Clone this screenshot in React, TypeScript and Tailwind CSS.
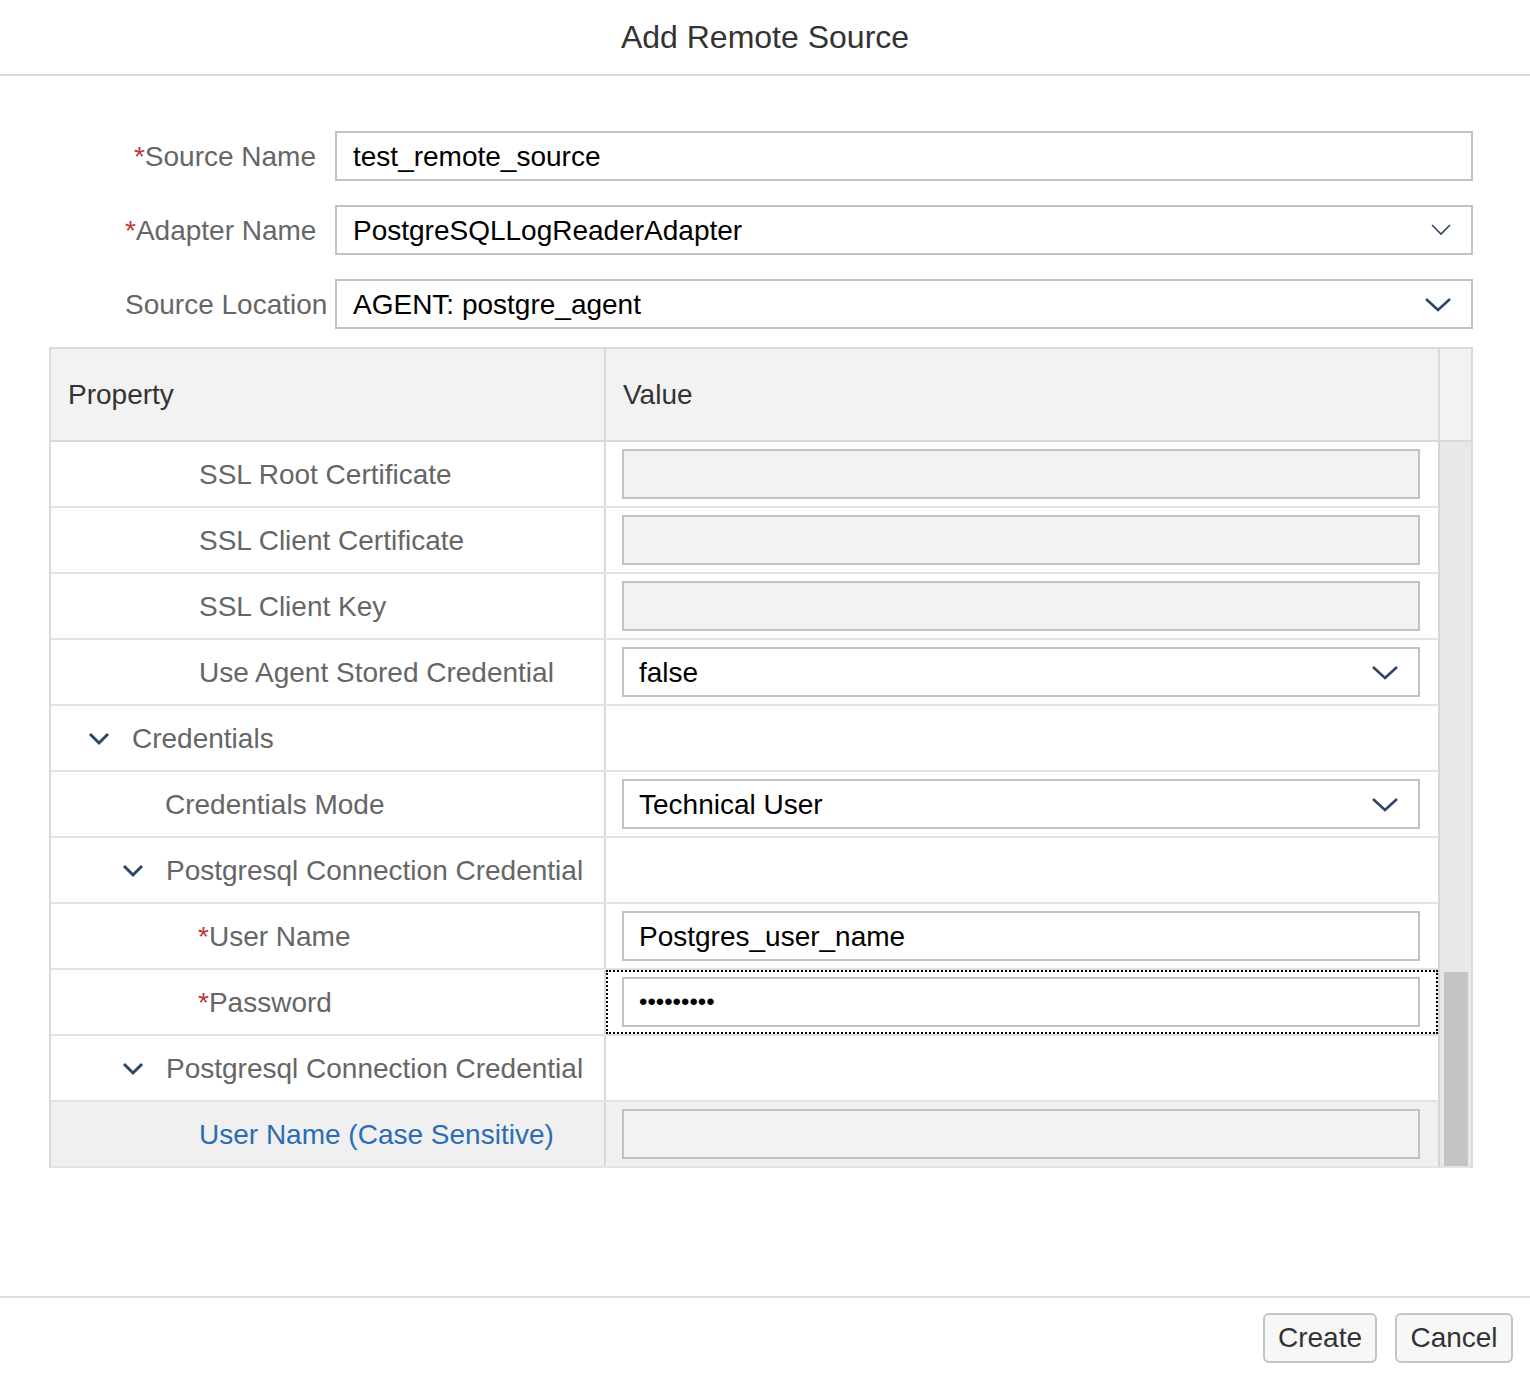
import React from 'react';

const FONT = "font-['Liberation_Sans',Arial,sans-serif]";

const TreeChevron = () => (
    <svg width="22" height="14" viewBox="0 0 22 14" className="shrink-0">
        <polyline points="2,2 11,11 20,2" fill="none" stroke="#2c4766" strokeWidth="3" />
    </svg>
);

const SelectChevron = ({ thin }: { thin?: boolean }) =>
    thin ? (
        <svg width="20" height="12" viewBox="0 0 20 12" className="shrink-0">
            <polyline points="1,1 10,10 19,1" fill="none" stroke="#2c4766" strokeWidth="1.6" />
        </svg>
    ) : (
        <svg width="26" height="15" viewBox="0 0 26 15" className="shrink-0">
            <polyline points="1,2 13,13 25,2" fill="none" stroke="#2c4766" strokeWidth="2.6" />
        </svg>
    );

const Req = () => <span className="text-[#bb3a3a]">*</span>;

type FormRowProps = { label: React.ReactNode; value: string; select?: 'thin' | 'bold' };

const FormRow: React.FC<FormRowProps> = ({ label, value, select }) => (
    <div className="flex items-center h-[50px]">
        <div className="w-[267px] pl-[76px] pt-[2px] text-right whitespace-nowrap text-[28px] text-[#666]">{label}</div>
        <div className="ml-[19px] flex-1 h-[50px] border-2 border-[#c2c2c2] bg-white flex items-center pl-[16px] pr-[20px]">
            <span className="flex-1 pt-[2px] text-[28px] text-black">{value}</span>
            {select && <SelectChevron thin={select === 'thin'} />}
        </div>
    </div>
);

type Row = {
    label: string;
    indent: number;
    req?: boolean;
    tree?: boolean;
    value?: string;
    kind?: 'empty' | 'text' | 'select' | 'password' | 'none';
    focus?: boolean;
    hover?: boolean;
    link?: boolean;
};

const rows: Row[] = [
    { label: 'SSL Root Certificate', indent: 148, kind: 'empty' },
    { label: 'SSL Client Certificate', indent: 148, kind: 'empty' },
    { label: 'SSL Client Key', indent: 148, kind: 'empty' },
    { label: 'Use Agent Stored Credential', indent: 148, kind: 'select', value: 'false' },
    { label: 'Credentials', indent: 37, tree: true, kind: 'none' },
    { label: 'Credentials Mode', indent: 114, kind: 'select', value: 'Technical User' },
    { label: 'Postgresql Connection Credential', indent: 71, tree: true, kind: 'none' },
    { label: 'User Name', indent: 147, req: true, kind: 'text', value: 'Postgres_user_name' },
    { label: 'Password', indent: 147, req: true, kind: 'password', focus: true },
    { label: 'Postgresql Connection Credential', indent: 71, tree: true, kind: 'none' },
    { label: 'User Name (Case Sensitive)', indent: 148, kind: 'empty', hover: true, link: true },
];

const ValueCell: React.FC<{ row: Row }> = ({ row }) => {
    if (row.kind === 'none') return null;
    const bg = row.kind === 'empty' ? 'bg-[#f2f2f2]' : 'bg-white';
    return (
        <div className={`h-[50px] border-2 border-[#c2c2c2] ${bg} flex items-center pl-[15px] pr-[20px]`}>
            {row.kind === 'password' ? (
                <span className="flex-1 text-[24px] text-black leading-none">{'•'.repeat(9)}</span>
            ) : (
                <span className="flex-1 pt-[2px] text-[28px] text-black leading-none">{row.value}</span>
            )}
            {row.kind === 'select' && <SelectChevron />}
        </div>
    );
};

export default function App() {
    return (
        <div className={`${FONT} w-[1530px] h-[1376px] bg-white flex flex-col`}>
            {/* Header */}
            <div className="h-[76px] shrink-0 border-b-2 border-[#d9d9d9] flex items-center justify-center">
                <span className="text-[32px] text-[#333]">Add Remote Source</span>
            </div>

            {/* Body */}
            <div className="flex-1 pt-[55px] pl-[49px] pr-[57px]">
                <div className="flex flex-col gap-[24px]">
                    <FormRow label={<><Req />Source Name</>} value="test_remote_source" />
                    <FormRow label={<><Req />Adapter Name</>} value="PostgreSQLLogReaderAdapter" select="thin" />
                    <FormRow label="Source Location" value="AGENT: postgre_agent" select="bold" />
                </div>

                {/* Properties table */}
                <div className="mt-[18px] border-2 border-[#dadada] border-b-0">
                    <div className="flex h-[93px] bg-[#f2f2f2] border-b-2 border-[#dadada]">
                        <div className="w-[555px] border-r-2 border-[#dadada] flex items-center pl-[17px] text-[28px] text-[#333]">
                            Property
                        </div>
                        <div className="flex-1 border-r-2 border-[#dadada] flex items-center pl-[17px] text-[28px] text-[#333]">
                            Value
                        </div>
                        <div className="w-[31px]" />
                    </div>
                    <div className="flex">
                        <div className="flex-1 flex flex-col">
                            {rows.map((row, i) => (
                                <div
                                    key={i}
                                    className={`flex h-[66px] border-b-2 border-[#e3e3e3] ${row.hover ? 'bg-[#f0f0f0]' : 'bg-white'}`}
                                >
                                    <div
                                        className="w-[555px] border-r-2 border-[#dadada] flex items-center whitespace-nowrap text-[28px] pt-[2px]"
                                        style={{ paddingLeft: row.indent }}
                                    >
                                        {row.tree && (
                                            <span className="mr-[22px] flex items-center">
                                                <TreeChevron />
                                            </span>
                                        )}
                                        <span className={row.link ? 'text-[#2a6db5]' : 'text-[#666]'}>
                                            {row.req && <Req />}
                                            {row.label}
                                        </span>
                                    </div>
                                    <div
                                        className={`flex-1 flex flex-col justify-center pl-[16px] pr-[18px] ${
                                            row.focus ? 'outline-2 outline-dotted outline-black -outline-offset-2' : ''
                                        }`}
                                    >
                                        <ValueCell row={row} />
                                    </div>
                                </div>
                            ))}
                        </div>
                        {/* Scrollbar */}
                        <div className="w-[33px] border-l-2 border-[#d6d6d6] bg-[#e8e8e8] flex flex-col items-center border-b-2 border-b-[#e3e3e3]">
                            <div className="h-[530px]" />
                            <div className="w-[24px] flex-1 bg-[#c4c4c4]" />
                        </div>
                    </div>
                </div>
            </div>

            {/* Footer */}
            <div className="h-[80px] shrink-0 border-t-2 border-[#dedede] flex items-start justify-end gap-[18px] pt-[15px] pr-[17px]">
                <button className="h-[50px] w-[114px] rounded-[6px] border-2 border-[#c4c4c4] bg-[#f7f7f7] text-[28px] text-[#333]">
                    Create
                </button>
                <button className="h-[50px] w-[118px] rounded-[6px] border-2 border-[#c4c4c4] bg-[#f7f7f7] text-[28px] text-[#333]">
                    Cancel
                </button>
            </div>
        </div>
    );
}
